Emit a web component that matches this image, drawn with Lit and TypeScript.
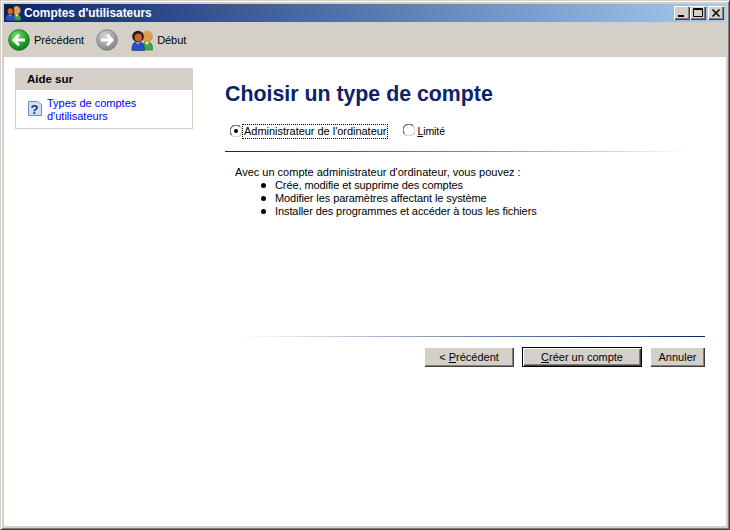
import { LitElement, html, css, svg } from "lit";
import { customElement } from "lit/decorators.js";

const users = (s: number) => html`<svg class="ic" width=${s} height=${s} viewBox="0 0 22 22">
  <path d="M11 21c0-4 .500-8.500 5-8.500s6 4 5.500 8.500z" fill="#3ea544" stroke="#237a30" stroke-width=".6"/>
  <path d="M13.500 12.500h5l-2.500 3.500z" fill="#f4f0e0"/>
  <circle cx="16" cy="7.500" r="5.200" fill="#e59c4c" stroke="#b9762e" stroke-width=".7"/>
  <path d="M11.500 7c.5-4 2.500-5.500 4.500-5.500s4 1.500 4.500 5.500c-1.500-2-7-2-9 0z" fill="#d9a45e"/>
  <path d="M1 21.500c-.5-5 1-9 6-9s6.500 4 6.500 9z" fill="#2a4ec0" stroke="#16307c" stroke-width=".6"/>
  <path d="M4.500 12.500h5L7 16z" fill="#8fb0ee"/>
  <circle cx="7" cy="7.500" r="5.800" fill="#1c1a1e"/>
  <ellipse cx="7.300" cy="8.500" rx="3.700" ry="4" fill="#d2641f"/>
</svg>`;

const round = (id: string, hi: string, bg: string, edge: string, d: string) => html`<svg width="22" height="22" viewBox="0 0 22 22">
  <defs><radialGradient id=${id} cx=".4" cy=".3" r=".8"><stop offset="0" stop-color=${hi}/><stop offset=".55" stop-color=${bg}/><stop offset="1" stop-color=${edge}/></radialGradient></defs>
  <circle cx="11" cy="11" r="10.300" fill=${"url(#" + id + ")"} stroke=${edge} stroke-width=".8"/>
  ${svg`<path d=${d} fill="none" stroke="#fff" stroke-width="2.800" stroke-linejoin="miter"/>`}
</svg>`;

const radio = (checked: boolean) => html`<svg class="rd" viewBox="0 0 12 12">
  <circle cx="6" cy="6" r="5" fill="#fff"/>
  <path d="M1.800 10.200A5.500 5.500 0 0 1 10.200 1.800" fill="none" stroke="#6e6e6e" stroke-width="1.200"/>
  <path d="M10.200 1.800A5.500 5.500 0 0 1 1.800 10.200" fill="none" stroke="#d4d0c8" stroke-width="1.200"/>
  ${checked ? svg`<circle cx="6" cy="6" r="2" fill="#000"/>` : ""}
</svg>`;

@customElement("app-root")
export class AppRoot extends LitElement {
  static styles = css`
    :host { display: block; width: 730px; height: 530px; }
    * { box-sizing: border-box; }
    .win { width: 730px; height: 530px; background: #d4d0c8; display: flex; flex-direction: column; padding: 3px;
      border: 1px solid; border-color: #d4d0c8 #404040 #404040 #d4d0c8; box-shadow: inset 1px 1px 0 #fff, inset -1px -1px 0 #808080; font: 11px "Liberation Sans", sans-serif; color: #000; }
    .title { height: 18px; flex: none; display: flex; align-items: center; padding: 0 2px 0 1px;
      background: linear-gradient(90deg, #0a246a, #a6caf0); color: #fff; font-weight: 700; font-size: 11.900px; }
    .title .tx { flex: 1; margin-left: 3px; }
    .wb { width: 16px; height: 14px; background: #d4d0c8; box-shadow: inset 1px 1px 0 #fff, inset -1px -1px 0 #404040, inset -2px -2px 0 #808080; display: flex; align-items: center; justify-content: center; }
    .wb.gap { margin-left: 2px; }
    .tb { height: 35px; flex: none; display: flex; align-items: center; padding: 0 0 0 4px; }
    .tb svg { flex: none; display: block; }
    .tb span { margin-left: 4px; font-size: 11px; }
    .tb .next { margin-left: 12px; }
    .tb .home { margin-left: 13px; }
    .tb .hl { margin-left: 4px; letter-spacing: -.05px; }
    .main { flex: 1; background: #fff; display: flex; min-height: 0; }
    .side { width: 178px; margin: 11px 0 0 11px; height: 61px; border: 1px solid #d4d0c8; border-top: 0; flex: none; }
    .side h3 { margin: 0; height: 22px; background: #d4d0c8; font-size: 11.500px; font-weight: 700; line-height: 22px; padding-left: 11px; }
    .sl { display: flex; padding: 7px 0 0 12px; gap: 5px; color: #0000ff; line-height: 13px; font-size: 11px; }
    .sl svg { margin-top: 3px; flex: none; }
    .content { flex: 1; margin-left: 32px; display: flex; flex-direction: column; }
    h1 { margin: 22px 0 0; font: 700 21.330px/30px "Liberation Sans", sans-serif; color: #0a2468; }
    .radios { display: flex; margin: 14px 0 0 5px; height: 16px; align-items: center; }
    .rd { width: 12px; height: 12px; flex: none; }
    .rl { margin-left: 1px; padding: 0 1px; line-height: 13px; outline: 1px dotted #000; letter-spacing: -.03px; }
    .lim { margin-left: 16px; }
    .limt { margin-left: 2px; font-size: 10.500px; letter-spacing: -.1px; }
    .rule { height: 1px; margin-top: 12px; width: 465px; background: linear-gradient(90deg, #0a246a, #7f93b8 55%, #fff); flex: none; }
    .intro { margin: 14px 0 0 10px; line-height: 13px; }
    ul { margin: 0; padding: 0 0 0 50px; list-style: none; line-height: 13px; letter-spacing: -.09px; }
    li { position: relative; }
    li::before { content: ""; position: absolute; left: -14px; top: 4px; width: 5px; height: 5px; border-radius: 50%; background: #000; }
    .fill { flex: 1; }
    .rule2 { width: 465px; height: 1px; margin: 0 0 0 15px; background: linear-gradient(90deg, #fff, #7f93b8 45%, #0a246a); flex: none; }
    .btns { display: flex; justify-content: flex-end; width: 480px; gap: 8px; margin-top: 10px; height: 20px; margin-bottom: 159px; }
    button { all: unset; box-sizing: border-box; height: 20px; background: #d4d0c8; font: 11px "Liberation Sans", sans-serif; text-align: center; line-height: 19px;
      box-shadow: inset 1px 1px 0 #fff, inset -1px -1px 0 #404040, inset -2px -2px 0 #808080; }
    button.def { box-shadow: inset 0 0 0 1px #000, inset 2px 2px 0 #fff, inset -2px -2px 0 #404040, inset -3px -3px 0 #808080; }
    .b1 { width: 90px; } .b2 { width: 120px; } .b3 { width: 55px; }
  `;

  render() {
    return html`<div class="win">
      <div class="title">
        ${users(16)}
        <span class="tx">Comptes d'utilisateurs</span>
        <div class="wb"><svg width="16" height="14"><rect x="4" y="9" width="6" height="2" fill="#000"/></svg></div>
        <div class="wb"><svg width="16" height="14"><path d="M3.500 2.500h9v8h-9zM3.500 3.500h9" fill="none" stroke="#000"/></svg></div>
        <div class="wb gap"><svg width="16" height="14"><path d="M4.500 3.500l7 7m0-7l-7 7" stroke="#000" stroke-width="1.500"/></svg></div>
      </div>
      <div class="tb">
        ${round("gb", "#86e070", "#22a52a", "#0f6a12", "M17 11H6.500M11 5.800L5.800 11l5.200 5.200")}
        <span>Précédent</span>
        <div class="next">${round("gg", "#d8d8d8", "#a3a3a0", "#777", "M5 11h10.500M11 5.800L16.200 11l-5.200 5.200")}</div>
        <div class="home">${users(22)}</div>
        <span class="hl">Début</span>
      </div>
      <div class="main">
        <div class="side">
          <h3>Aide sur</h3>
          <div class="sl">
            <svg width="14" height="17" viewBox="0 0 14 17"><path d="M.5 1.500h9l4 3v11h-13z" fill="#cfe0f4" stroke="#6f8fb8"/><text x="2.500" y="14" font-family="Liberation Sans" font-size="13" font-weight="700" fill="#1c2a9c">?</text></svg>
            <div>Types de comptes<br>d'utilisateurs</div>
          </div>
        </div>
        <div class="content">
          <h1>Choisir un type de compte</h1>
          <div class="radios">
            ${radio(true)}
            <span class="rl">Administrateur de l'ordinateur</span>
            <span class="lim">${radio(false)}</span>
            <span class="limt"><u>L</u>imité</span>
          </div>
          <div class="rule"></div>
          <div class="intro">Avec un compte administrateur d'ordinateur, vous pouvez :</div>
          <ul>
            <li>Crée, modifie et supprime des comptes</li>
            <li>Modifier les paramètres affectant le système</li>
            <li>Installer des programmes et accéder à tous les fichiers</li>
          </ul>
          <div class="fill"></div>
          <div class="rule2"></div>
          <div class="btns">
            <button class="b1">&lt; <u>P</u>récédent</button>
            <button class="def b2"><u>C</u>réer un compte</button>
            <button class="b3">Annuler</button>
          </div>
        </div>
      </div>
    </div>`;
  }
}
